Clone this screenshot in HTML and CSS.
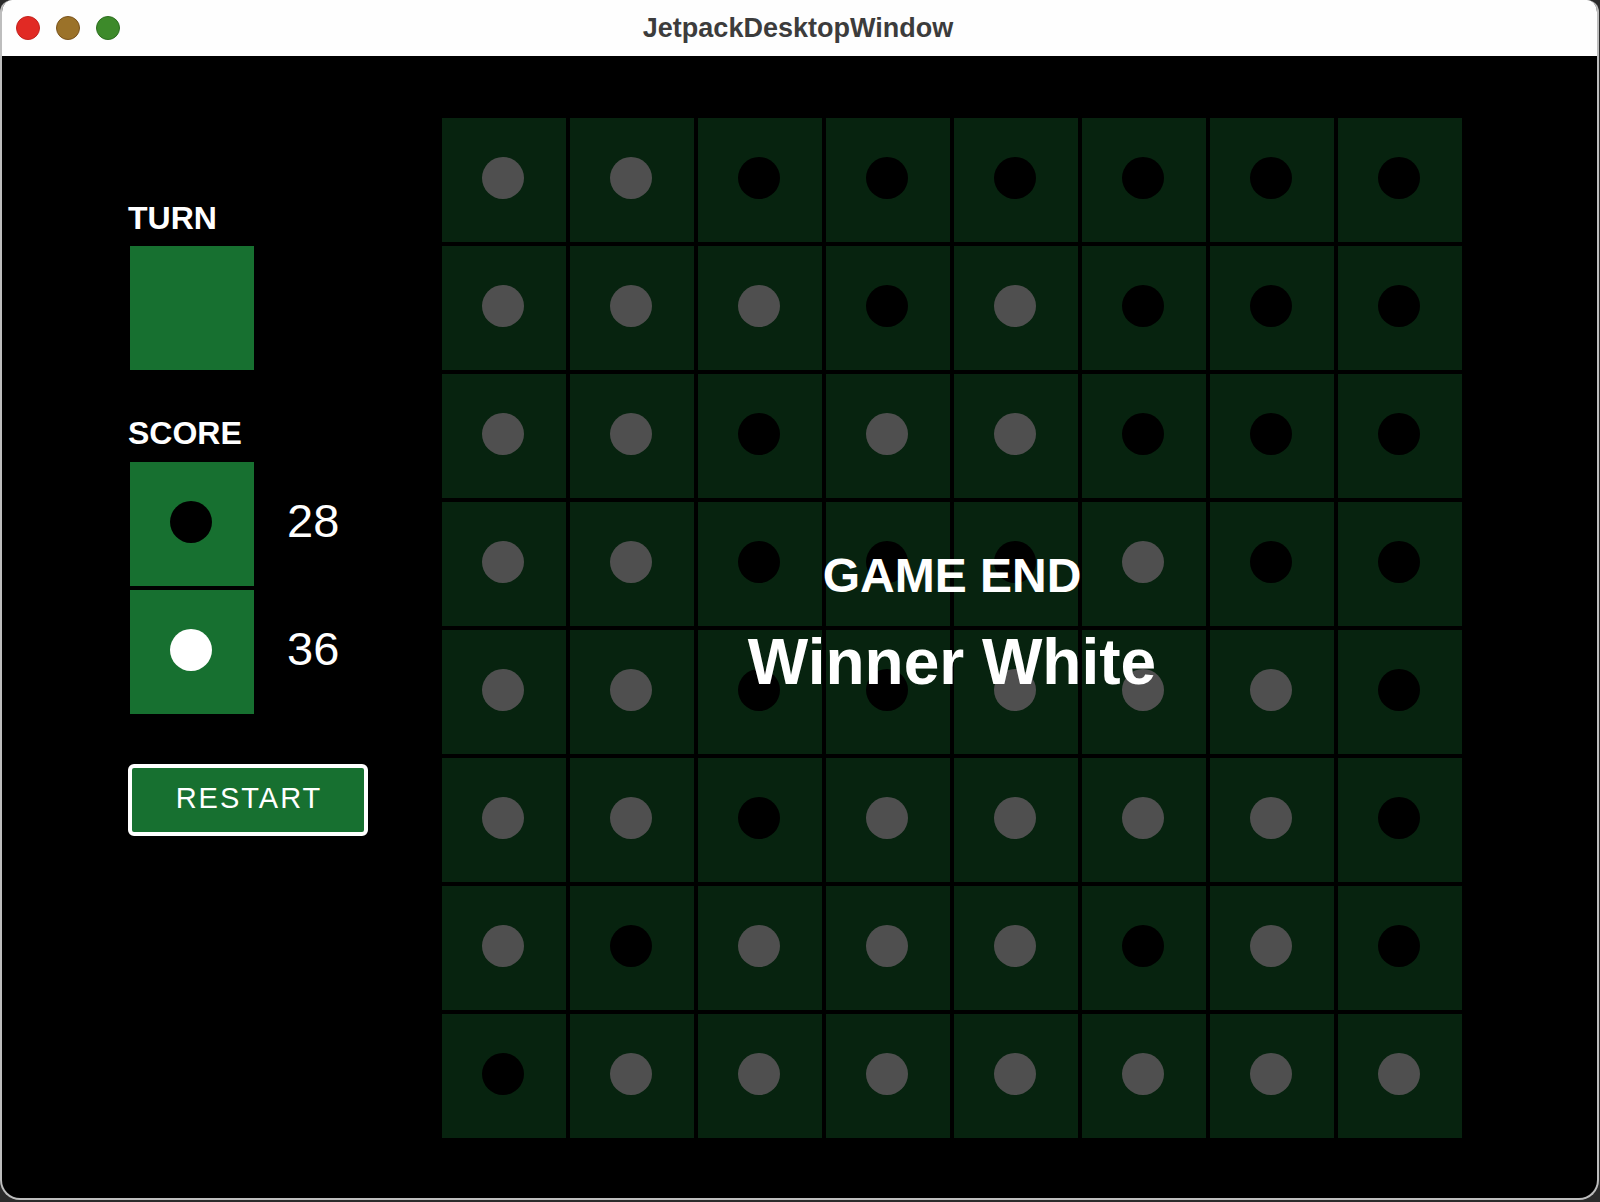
FILE: index.html
```html
<!DOCTYPE html>
<html>
<head>
<meta charset="utf-8">
<link rel="stylesheet" href="styles.css">
</head>
<body>
<div class="window">
  <div class="titlebar">
    <div class="lights">
      <span class="light red"></span>
      <span class="light yellow"></span>
      <span class="light green"></span>
    </div>
    <div class="title">JetpackDesktopWindow</div>
  </div>
  <div class="content">
    <div class="panel">
      <div class="label">TURN</div>
      <div class="box turn-box"></div>
      <div class="label score-label">SCORE</div>
      <div class="score-row">
        <div class="box"><span class="disc b"></span></div>
        <div class="score-num">28</div>
      </div>
      <div class="score-row">
        <div class="box"><span class="disc w"></span></div>
        <div class="score-num">36</div>
      </div>
      <button class="restart">RESTART</button>
    </div>
    <div class="board">
      <div class="cell"><span class="disc w"></span></div>
      <div class="cell"><span class="disc w"></span></div>
      <div class="cell"><span class="disc b"></span></div>
      <div class="cell"><span class="disc b"></span></div>
      <div class="cell"><span class="disc b"></span></div>
      <div class="cell"><span class="disc b"></span></div>
      <div class="cell"><span class="disc b"></span></div>
      <div class="cell"><span class="disc b"></span></div>

      <div class="cell"><span class="disc w"></span></div>
      <div class="cell"><span class="disc w"></span></div>
      <div class="cell"><span class="disc w"></span></div>
      <div class="cell"><span class="disc b"></span></div>
      <div class="cell"><span class="disc w"></span></div>
      <div class="cell"><span class="disc b"></span></div>
      <div class="cell"><span class="disc b"></span></div>
      <div class="cell"><span class="disc b"></span></div>

      <div class="cell"><span class="disc w"></span></div>
      <div class="cell"><span class="disc w"></span></div>
      <div class="cell"><span class="disc b"></span></div>
      <div class="cell"><span class="disc w"></span></div>
      <div class="cell"><span class="disc w"></span></div>
      <div class="cell"><span class="disc b"></span></div>
      <div class="cell"><span class="disc b"></span></div>
      <div class="cell"><span class="disc b"></span></div>

      <div class="cell"><span class="disc w"></span></div>
      <div class="cell"><span class="disc w"></span></div>
      <div class="cell"><span class="disc b"></span></div>
      <div class="cell"><span class="disc b"></span></div>
      <div class="cell"><span class="disc b"></span></div>
      <div class="cell"><span class="disc w"></span></div>
      <div class="cell"><span class="disc b"></span></div>
      <div class="cell"><span class="disc b"></span></div>

      <div class="cell"><span class="disc w"></span></div>
      <div class="cell"><span class="disc w"></span></div>
      <div class="cell"><span class="disc b"></span></div>
      <div class="cell"><span class="disc b"></span></div>
      <div class="cell"><span class="disc w"></span></div>
      <div class="cell"><span class="disc w"></span></div>
      <div class="cell"><span class="disc w"></span></div>
      <div class="cell"><span class="disc b"></span></div>

      <div class="cell"><span class="disc w"></span></div>
      <div class="cell"><span class="disc w"></span></div>
      <div class="cell"><span class="disc b"></span></div>
      <div class="cell"><span class="disc w"></span></div>
      <div class="cell"><span class="disc w"></span></div>
      <div class="cell"><span class="disc w"></span></div>
      <div class="cell"><span class="disc w"></span></div>
      <div class="cell"><span class="disc b"></span></div>

      <div class="cell"><span class="disc w"></span></div>
      <div class="cell"><span class="disc b"></span></div>
      <div class="cell"><span class="disc w"></span></div>
      <div class="cell"><span class="disc w"></span></div>
      <div class="cell"><span class="disc w"></span></div>
      <div class="cell"><span class="disc b"></span></div>
      <div class="cell"><span class="disc w"></span></div>
      <div class="cell"><span class="disc b"></span></div>

      <div class="cell"><span class="disc b"></span></div>
      <div class="cell"><span class="disc w"></span></div>
      <div class="cell"><span class="disc w"></span></div>
      <div class="cell"><span class="disc w"></span></div>
      <div class="cell"><span class="disc w"></span></div>
      <div class="cell"><span class="disc w"></span></div>
      <div class="cell"><span class="disc w"></span></div>
      <div class="cell"><span class="disc w"></span></div>

      <div class="overlay">
        <div class="game-end">GAME END</div>
        <div class="winner">Winner White</div>
      </div>
    </div>
  </div>
</div>
</body>
</html>
```

FILE: styles.css
```css
html, body {
  margin: 0;
  padding: 0;
  background: #2b2b2b;
}

body {
  width: 1600px;
  height: 1202px;
  overflow: hidden;
  font-family: "Liberation Sans", Arial, Helvetica, sans-serif;
}

.window {
  width: 1599px;
  height: 1200px;
  box-sizing: border-box;
  border: 2px solid #bdbdbd;
  border-top: none;
  border-radius: 12px 12px 20px 20px;
  overflow: hidden;
  background: #000;
  display: flex;
  flex-direction: column;
}

.titlebar {
  height: 56px;
  flex: 0 0 56px;
  background: #fefefe;
  position: relative;
  margin: 0 -2px;
  display: flex;
  align-items: center;
  justify-content: center;
}

.lights {
  position: absolute;
  left: 16px;
  top: 16px;
  display: flex;
  gap: 16px;
}

.light {
  width: 24px;
  height: 24px;
  border-radius: 50%;
  box-sizing: border-box;
  display: block;
}

.light.red {
  background: #e12a24;
  border: 1px solid #c4221d;
}

.light.yellow {
  background: #9b7229;
  border: 1px solid #7a531c;
}

.light.green {
  background: #3d8a2a;
  border: 1px solid #2c6e1f;
}

.title {
  font-weight: bold;
  font-size: 27px;
  line-height: 54px;
  color: #3c3c3c;
  margin-left: -3px;
}

.content {
  flex: 1;
  display: flex;
  padding: 62px 0 0 126px;
}

.panel {
  width: 314px;
  flex: 0 0 314px;
  padding-top: 82px;
  display: flex;
  flex-direction: column;
  align-items: flex-start;
}

.label {
  color: #fff;
  font-weight: bold;
  font-size: 32px;
  line-height: 36px;
}

.box {
  width: 124px;
  height: 124px;
  background: #177030;
  margin-left: 2px;
  display: flex;
  align-items: center;
  justify-content: center;
}

.turn-box {
  margin-top: 10px;
}

.score-label {
  margin-top: 45px;
  margin-bottom: 11px;
}

.score-row {
  display: flex;
  align-items: center;
  margin-bottom: 4px;
}

.score-num {
  color: #fff;
  font-size: 47px;
  line-height: 54px;
  margin-left: 33px;
  margin-bottom: 6px;
}

.disc {
  width: 42px;
  height: 42px;
  border-radius: 50%;
  margin: 0 2px 4px 0;
  display: block;
}

.disc.b {
  background: #000;
}

.disc.w {
  background: #fff;
}

.restart {
  margin-top: 46px;
  width: 240px;
  height: 72px;
  box-sizing: border-box;
  border: 4px solid #fff;
  border-radius: 6px;
  background: #177030;
  color: #fff;
  font-family: "Liberation Sans", Arial, Helvetica, sans-serif;
  font-size: 29px;
  letter-spacing: 2px;
  padding: 0 0 4px 2px;
}

.board {
  position: relative;
  display: grid;
  grid-template-columns: repeat(8, 124px);
  grid-auto-rows: 124px;
  gap: 4px;
  align-self: flex-start;
}

.cell {
  background: #177030;
  display: flex;
  align-items: center;
  justify-content: center;
}

.overlay {
  position: absolute;
  inset: -2px;
  background: rgba(0, 0, 0, 0.69);
  display: flex;
  flex-direction: column;
  align-items: center;
  justify-content: center;
  padding-bottom: 9px;
  box-sizing: border-box;
  color: #fff;
  font-weight: bold;
}

.game-end {
  font-size: 48px;
  line-height: 56px;
}

.winner {
  font-size: 64px;
  line-height: 74px;
  margin-top: 21px;
}
```
